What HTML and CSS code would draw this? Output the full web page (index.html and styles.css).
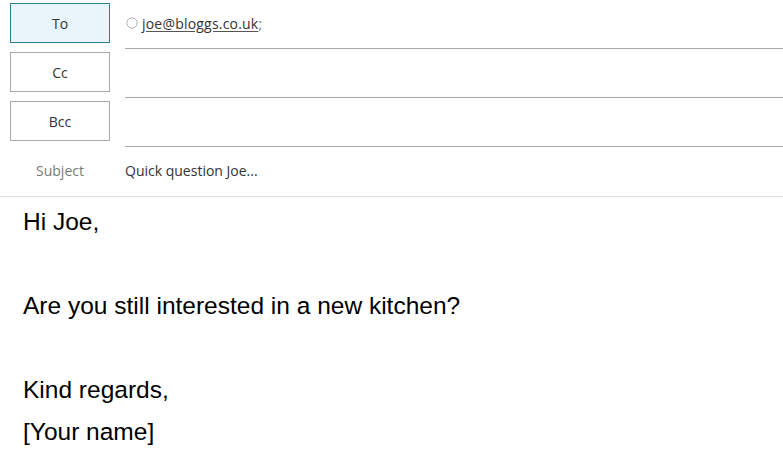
FILE: index.html
```html
<!DOCTYPE html>
<html>
<head>
<meta charset="utf-8">
<link rel="stylesheet" href="styles.css">
</head>
<body>
<div class="compose">
  <div class="header">
    <div class="row">
      <div class="label-col"><button class="btn btn-active">To</button></div>
      <div class="field">
        <span class="recipient">
          <svg class="presence" width="12" height="12" viewBox="0 0 12 12"><circle cx="6" cy="6" r="5.2" fill="none" stroke="#b4b4b4" stroke-width="1"/></svg>
          <span class="addr">joe@bloggs.co.uk</span><span class="semi">;</span>
        </span>
      </div>
    </div>
    <div class="row">
      <div class="label-col"><button class="btn">Cc</button></div>
      <div class="field"></div>
    </div>
    <div class="row">
      <div class="label-col"><button class="btn">Bcc</button></div>
      <div class="field"></div>
    </div>
    <div class="row subject-row">
      <div class="label-col"><span class="subject-label">Subject</span></div>
      <div class="subject-text">Quick question Joe...</div>
    </div>
  </div>
  <div class="body">
    <p>Hi Joe,</p>
    <p>&nbsp;</p>
    <p>Are you still interested in a new kitchen?</p>
    <p>&nbsp;</p>
    <p>Kind regards,</p>
    <p>[Your name]</p>
  </div>
</div>
</body>
</html>
```

FILE: styles.css
```css
html, body {
  margin: 0;
  padding: 0;
  background: #ffffff;
}
.compose {
  width: 783px;
  height: 459px;
  overflow: hidden;
  font-family: "Open Sans", "Noto Sans", sans-serif;
}
.header {
  display: flex;
  flex-direction: column;
  border-bottom: 1px solid #dedede;
}
.row {
  display: flex;
  height: 49px;
}
.label-col {
  width: 100px;
  margin-left: 10px;
  margin-right: 15px;
  display: flex;
  align-items: flex-start;
  justify-content: center;
}
.btn {
  box-sizing: border-box;
  width: 100px;
  height: 40px;
  margin-top: 3px;
  border: 1px solid #a9a9a9;
  background: #ffffff;
  font-family: "Open Sans", "Noto Sans", sans-serif;
  font-size: 14px;
  color: #333333;
  padding: 0;
}
.btn-active {
  background: #eaf5fb;
  border-color: #2d7f93;
}
.field {
  flex: 1;
  height: 48px;
  border-bottom: 1px solid #a8a8a8;
  display: flex;
  align-items: flex-start;
}
.recipient {
  display: flex;
  align-items: center;
  margin-top: 13px;
  height: 20px;
  font-size: 14px;
  color: #333333;
}
.presence {
  margin-left: 1px;
  margin-right: 4px;
}
.addr {
  letter-spacing: 0.2px;
  text-decoration: underline;
  text-decoration-color: #555555;
  text-underline-offset: 2px;
}
.semi {
  color: #777777;
}
.subject-row {
  height: 49px;
  align-items: center;
}
.subject-row .label-col {
  align-items: center;
}
.subject-label {
  font-size: 14px;
  color: #7a7a7a;
  margin-top: -3px;
}
.subject-text {
  font-size: 14px;
  color: #333333;
  margin-top: -3px;
}
.body {
  padding: 4px 0 0 23px;
  font-family: "Liberation Sans", Arial, sans-serif;
  font-size: 24.5px;
  line-height: 42px;
  color: #000000;
}
.body p {
  margin: 0;
}
```
